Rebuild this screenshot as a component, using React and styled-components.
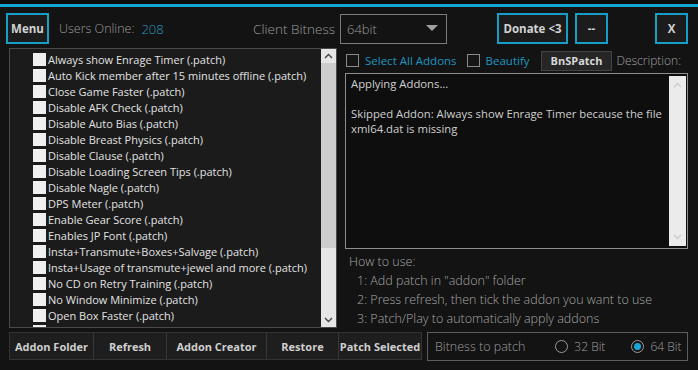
import React from "react";
import styled, { createGlobalStyle } from "styled-components";

const Global = createGlobalStyle`
  html, body { margin: 0; padding: 0; background: #131313; }
  * { box-sizing: border-box; }
`;

const Root = styled.div`
  width: 698px;
  height: 370px;
  background: #131313;
  font-family: "Open Sans", "Noto Sans", sans-serif;
  font-size: 11px;
  color: #d6d6d6;
  display: flex;
  flex-direction: column;
  overflow: hidden;
  border-top: 4px solid #0d0d0d;
`;

const AccentBar = styled.div`
  height: 3px;
  background: #13a6d6;
  flex-shrink: 0;
`;

const Header = styled.div`
  display: flex;
  align-items: center;
  height: 31px;
  margin-top: 6px;
  padding: 0 10px 0 6px;
  flex-shrink: 0;
`;

const CyanButton = styled.button`
  height: 31px;
  width: ${(p) => p.$w || 34}px;
  padding: 0;
  margin: 0 0 0 ${(p) => p.$ml || 0}px;
  background: #1c1c1c;
  border: 2px solid #169ec9;
  color: #d2d2d2;
  font-family: inherit;
  font-weight: 700;
  font-size: 11.5px;
  display: flex;
  align-items: center;
  justify-content: center;
  flex-shrink: 0;
`;

const Label = styled.span`
  font-weight: 300;
  font-size: ${(p) => p.$fs || 13}px;
  color: #9c9c9c;
  margin-left: ${(p) => p.$ml || 0}px;
  white-space: nowrap;
`;

const Count = styled.span`
  font-weight: 300;
  font-size: 13px;
  color: #2a9cc0;
  margin-left: 7px;
`;

const Select = styled.div`
  width: 107px;
  height: 30px;
  margin-left: 5px;
  border: 1px solid #7c7c7c;
  display: flex;
  align-items: center;
  justify-content: space-between;
  padding: 0 8px 0 6px;
  font-weight: 300;
  font-size: 13px;
  color: #9a9a9a;
  flex-shrink: 0;
`;

const Spacer = styled.div`
  flex: 1;
`;

const Body = styled.div`
  display: flex;
  gap: 8px;
  padding: 4px 10px 0 9px;
  height: 284px;
  flex-shrink: 0;
`;

const ListPanel = styled.div`
  width: 328px;
  height: 280px;
  border: 1px solid #4a4a4a;
  background: #1b1b1b;
  display: flex;
  overflow: hidden;
  flex-shrink: 0;
`;

const ListItems = styled.div`
  flex: 1;
  padding: 2px 0 0 23px;
  overflow: hidden;
`;

const Item = styled.div`
  height: 16px;
  display: flex;
  align-items: center;
  gap: 1px;
  font-size: 11px;
  color: #e2e2e2;
  white-space: nowrap;
`;

const WhiteBox = styled.span`
  width: 13px;
  height: 13px;
  background: #efefef;
  flex-shrink: 0;
  margin-right: 1px;
`;

const ScrollBar = styled.div`
  width: 15px;
  background: #e6e6e6;
  display: flex;
  flex-direction: column;
  align-items: center;
`;

const ScrollArrow = styled.div`
  height: 14px;
  width: 15px;
  display: flex;
  align-items: center;
  justify-content: center;
  background: #e6e6e6;
`;

const Thumb = styled.div`
  width: 15px;
  height: 185px;
  background: #cdcdcd;
`;

const Right = styled.div`
  flex: 1;
  min-width: 0;
  display: flex;
  flex-direction: column;
  padding-top: 3px;
`;

const Toolbar = styled.div`
  display: flex;
  align-items: center;
  height: 19px;
  padding-left: 1px;
  flex-shrink: 0;
  white-space: nowrap;
`;

const DarkBox = styled.span`
  width: 13px;
  height: 13px;
  border: 1px solid #8a8a8a;
  background: #151515;
  margin-left: ${(p) => p.$ml || 0}px;
  flex-shrink: 0;
`;

const CyanText = styled.span`
  color: #1d95c0;
  font-size: 11.5px;
  margin-left: 6px;
`;

const SmallButton = styled.div`
  height: 20px;
  padding: 0 9px;
  margin-left: 11px;
  background: #262626;
  border: 1px solid #434343;
  display: flex;
  align-items: center;
  font-weight: 700;
  font-size: 11px;
  color: #d8d8d8;
  flex-shrink: 0;
`;

const Desc = styled.span`
  font-weight: 300;
  font-size: 12px;
  color: #a0a0a0;
  margin-left: 4px;
`;

const LogBox = styled.div`
  margin-top: 3px;
  height: 176px;
  flex-shrink: 0;
  border: 1px solid #8e8e8e;
  background: #0e0e0e;
  display: flex;
  padding: 2px 1px 2px 0;
`;

const LogText = styled.div`
  flex: 1;
  padding: 0 0 0 5px;
  font-size: 11.3px;
  line-height: 15px;
  color: #cfcfcf;
`;

const LogScroll = styled.div`
  width: 17px;
  background: #ebebeb;
  display: flex;
  flex-direction: column;
  justify-content: space-between;
  align-items: center;
  padding: 6px 0;
`;

const HowTo = styled.div`
  padding: 3px 0 0 4px;
  font-weight: 300;
  font-size: 12.5px;
  color: #a5a5a5;
  line-height: 19px;
  white-space: nowrap;
`;

const Step = styled.div`
  padding-left: 8px;
`;

const Bottom = styled.div`
  display: flex;
  gap: 5px;
  padding: 4px 10px 0 9px;
`;

const ButtonBar = styled.div`
  display: flex;
  height: 28px;
  border: 1px solid #333;
  background: #1e1e1e;
  flex-shrink: 0;
`;

const BarButton = styled.div`
  width: ${(p) => p.$w}px;
  display: flex;
  align-items: center;
  justify-content: center;
  border-right: 1px solid #383838;
  font-weight: 700;
  font-size: 11px;
  color: #cfcfcf;
  white-space: nowrap;
  &:last-child { border-right: none; }
`;

const Group = styled.div`
  flex: 1;
  min-width: 0;
  height: 29px;
  border: 1px solid #5e5e5e;
  display: flex;
  align-items: center;
  padding-left: 7px;
  font-weight: 300;
  font-size: 12.5px;
  color: #9e9e9e;
  white-space: nowrap;
`;

const RadioText = styled.span`
  font-size: 12px;
`;

const Radio = styled.span`
  width: 13px;
  height: 13px;
  border-radius: 50%;
  border: 1px solid #9a9a9a;
  margin-left: ${(p) => p.$ml}px;
  margin-right: 6px;
  display: flex;
  align-items: center;
  justify-content: center;
  flex-shrink: 0;
  &::after {
    content: "";
    width: 7px;
    height: 7px;
    border-radius: 50%;
    background: ${(p) => (p.$on ? "#1aa7d8" : "transparent")};
  }
`;

const Chevron = ({ up, color = "#555" }) => (
  <svg width="9" height="6" viewBox="0 0 9 6">
    <path
      d={up ? "M1 5 L4.5 1.5 L8 5" : "M1 1 L4.5 4.5 L8 1"}
      fill="none"
      stroke={color}
      strokeWidth="1.4"
    />
  </svg>
);

const items = [
  "Always show Enrage Timer (.patch)",
  "Auto Kick member after 15 minutes offline (.patch)",
  "Close Game Faster (.patch)",
  "Disable AFK Check (.patch)",
  "Disable Auto Bias (.patch)",
  "Disable Breast Physics (.patch)",
  "Disable Clause (.patch)",
  "Disable Loading Screen Tips (.patch)",
  "Disable Nagle (.patch)",
  "DPS Meter (.patch)",
  "Enable Gear Score (.patch)",
  "Enables JP Font (.patch)",
  "Insta+Transmute+Boxes+Salvage (.patch)",
  "Insta+Usage of transmute+jewel and more (.patch)",
  "No CD on Retry Training (.patch)",
  "No Window Minimize (.patch)",
  "Open Box Faster (.patch)",
  "P-Pet-lite-buy-mode (.patch)",
];

const bar = [
  ["Addon Folder", 84],
  ["Refresh", 73],
  ["Addon Creator", 100],
  ["Restore", 72],
  ["Patch Selected", 82],
];

export default function App() {
  return (
    <Root>
      <Global />
      <AccentBar />
      <Header>
        <CyanButton $w={43}>Menu</CyanButton>
        <Label $ml={10} $fs={12.5}>Users Online:</Label>
        <Count>208</Count>
        <Spacer />
        <Label $fs={13.5}>Client Bitness</Label>
        <Select>
          <span>64bit</span>
          <svg width="12" height="7" viewBox="0 0 12 7">
            <path d="M0 0 L12 0 L6 6 Z" fill="#a0a0a0" />
          </svg>
        </Select>
        <CyanButton $w={71} $ml={50}>Donate &lt;3</CyanButton>
        <CyanButton $w={33} $ml={7}>--</CyanButton>
        <CyanButton $w={33} $ml={47}>X</CyanButton>
      </Header>
      <Body>
        <ListPanel>
          <ListItems>
            {items.map((t) => (
              <Item key={t}>
                <WhiteBox />
                <span>{t}</span>
              </Item>
            ))}
          </ListItems>
          <ScrollBar>
            <ScrollArrow>
              <Chevron up color="#444" />
            </ScrollArrow>
            <Thumb />
            <Spacer />
            <ScrollArrow>
              <Chevron color="#444" />
            </ScrollArrow>
          </ScrollBar>
        </ListPanel>
        <Right>
          <Toolbar>
            <DarkBox />
            <CyanText>Select All Addons</CyanText>
            <DarkBox $ml={10} />
            <CyanText>Beautify</CyanText>
            <SmallButton>BnSPatch</SmallButton>
            <Desc>Description:</Desc>
          </Toolbar>
          <LogBox>
            <LogText>
              Applying Addons...
              <br />
              <br />
              Skipped Addon: Always show Enrage Timer because the file
              <br />
              xml64.dat is missing
            </LogText>
            <LogScroll>
              <Chevron up color="#ccc" />
              <Chevron color="#ccc" />
            </LogScroll>
          </LogBox>
          <HowTo>
            How to use:
            <Step>1: Add patch in "addon" folder</Step>
            <Step>2: Press refresh, then tick the addon you want to use</Step>
            <Step>3: Patch/Play to automatically apply addons</Step>
          </HowTo>
        </Right>
      </Body>
      <Bottom>
        <ButtonBar>
          {bar.map(([t, w]) => (
            <BarButton key={t} $w={w}>
              {t}
            </BarButton>
          ))}
        </ButtonBar>
        <Group>
          Bitness to patch
          <Radio $ml={30} />
          <RadioText>32 Bit</RadioText>
          <Radio $ml={26} $on />
          <RadioText>64 Bit</RadioText>
        </Group>
      </Bottom>
    </Root>
  );
}
